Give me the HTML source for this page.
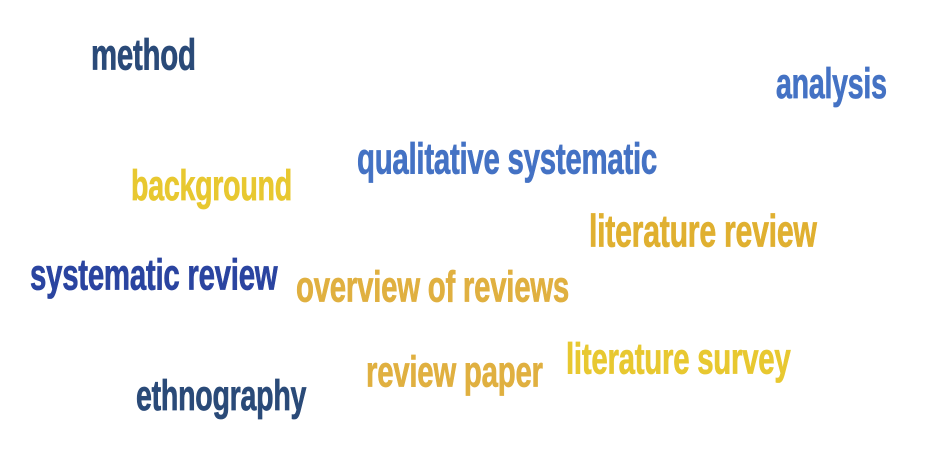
<!DOCTYPE html>
<html><head><meta charset="utf-8"><style>
html,body{margin:0;padding:0;background:#fff;width:936px;height:472px;overflow:hidden}
span{position:absolute;font-family:"Liberation Sans Narrow","Liberation Sans",sans-serif;font-weight:bold;font-size:35px;line-height:1;white-space:nowrap;transform-origin:0 0;transform:scale(0.84,1.25);letter-spacing:-0.3px;-webkit-text-stroke:0.6px currentColor}
</style></head><body>
<span style="left:91px;top:33px;color:#2a4a78">method</span>
<span style="left:776px;top:63px;color:#4472c4;font-size:34px">analysis</span>
<span style="left:357px;top:137px;color:#4472c4">qualitative systematic</span>
<span style="left:131px;top:165px;color:#e8c830;font-size:34px">background</span>
<span style="left:589px;top:209px;color:#e0b030;font-size:36px">literature review</span>
<span style="left:30px;top:253px;color:#2a44a0">systematic review</span>
<span style="left:296px;top:265px;color:#e0b040">overview of reviews</span>
<span style="left:566px;top:337px;color:#e8c830">literature survey</span>
<span style="left:366px;top:350px;color:#e0b040">review paper</span>
<span style="left:136px;top:375px;color:#2a4a78;font-size:34px">ethnography</span>
</body></html>
